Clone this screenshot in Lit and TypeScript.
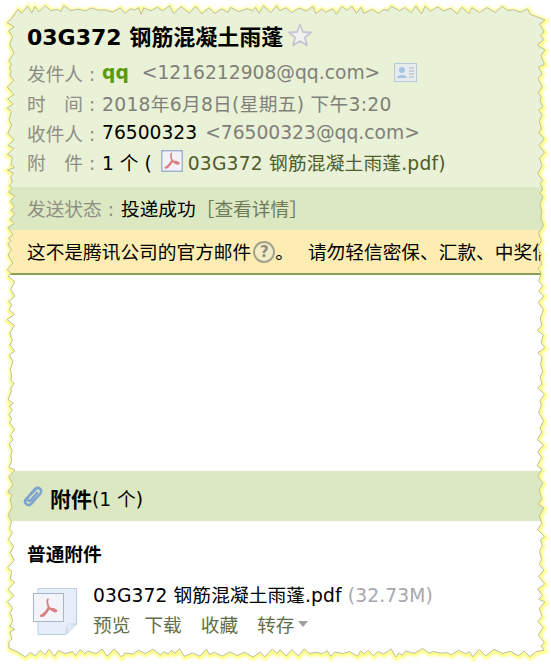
import { LitElement, html, css, svg } from "lit";
import { customElement } from "lit/decorators.js";

type Pt = [number, number];

function tornPath(): string {
  let seed = 4711;
  const rnd = () => {
    seed = (seed * 1103515245 + 12345) & 0x7fffffff;
    return seed / 0x7fffffff;
  };
  const pts: Pt[] = [];
  const edge = (from: number, to: number, base: number, amp: number, horizontal: boolean) => {
    const dir = to > from ? 1 : -1;
    let p = from;
    let up = true;
    while ((to - p) * dir > 0) {
      const off = (up ? rnd() * 0.5 : 0.5 + rnd() * 0.5) * amp;
      const v = base + off - amp / 2;
      pts.push(horizontal ? [p, v] : [v, p]);
      p += dir * (2.5 + rnd() * 6);
      up = !up;
    }
  };
  edge(18, 535, 10, 9, true);
  pts.push([545, 20]);
  edge(24, 648, 541, 8, false);
  pts.push([544, 650]);
  edge(536, 16, 653, 9, true);
  pts.push([9, 648]);
  edge(642, 22, 11, 8, false);
  pts.push([12, 18]);
  return "M" + pts.map((p) => `${p[0].toFixed(1)} ${p[1].toFixed(1)}`).join("L") + "Z";
}

const acrobat = svg`<path d="M12 3.5C10.2 3.5 10.6 8 12 11C10.6 14.6 7.6 17.6 4.6 19.4C6.8 20.6 9.8 16.6 12 12.8C14.2 12.2 17.6 12.6 19.6 14.4C19 16.4 14.6 14.6 12 11" fill="none" stroke="#d97f82" stroke-width="1.7" stroke-linejoin="round"/>`;

@customElement("app-root")
export class AppRoot extends LitElement {
  static styles = css`
    :host {
      display: block;
      position: relative;
      width: 551px;
      height: 665px;
      overflow: hidden;
      background: #fff;
      font-family: "DejaVu Sans", "Noto Sans CJK SC", sans-serif;
      font-size: 18.7px;
      color: #000;
    }
    .head { box-sizing: border-box; background: #e9f1d6; padding: 17px 0 0 27px; height: 187px; }
    .title { display: flex; align-items: center; height: 36px; font-size: 22px; font-weight: 700; margin-bottom: 4px; gap: 5px; white-space: nowrap; }
    .row { display: flex; align-items: center; height: 30px; white-space: nowrap; }
    .r3 { margin-bottom: -1px; }
    .label { color: #8e8e86; width: 75px; flex: none; }
    .gray { color: #80807a; }
    .spaced { letter-spacing: 0.3px; }
    .qq { color: #5b9a0a; font-weight: 700; }
    .sp { margin-left: 13px; }
    .sp2 { margin-left: 8px; }
    .link { color: #4f5c2b; letter-spacing: 0.2px; }
    .small-pdf { margin: 0 5px 0 9px; flex: none; }
    .card { margin-left: 14px; flex: none; }
    .status { box-sizing: border-box; background: #dce8c1; height: 43px; padding: 0 0 2px 27px; display: flex; align-items: center; white-space: nowrap; }
    .status .lbl { color: #8e8e86; width: 94px; }
    .status .br { color: #6f7a5a; }
    .warn { box-sizing: border-box; background: #fdedb2; height: 45px; border-bottom: 2px solid #8a9f55; padding: 0 0 2px 27px; display: flex; align-items: center; white-space: nowrap; overflow: hidden; }
    .q { width: 18px; height: 18px; border: 2px solid #a3a18d; border-radius: 50%; color: #8f8d79; font-size: 15px; font-weight: 700; display: flex; align-items: center; justify-content: center; flex: none; background: #f4ecc4; margin: 2px 0 0 2px; }
    .warn .tail { margin-left: 14px; }
    .blank { height: 196px; }
    .att-head { box-sizing: border-box; background: #dce8c1; height: 50px; display: flex; align-items: center; padding: 3px 0 0 22px; white-space: nowrap; }
    .att-head svg { margin-top: -2px; }
    .att-head b { font-size: 21px; margin-left: 7px; }
    .group { font-weight: 700; padding: 24px 0 0 27px; height: 41px; line-height: 20px; font-size: 18.7px; }
    .file { display: flex; padding-left: 33px; gap: 16px; }
    .file svg { flex: none; margin-top: 2px; }
    .name { height: 29px; line-height: 29px; white-space: nowrap; margin-top: -5px; letter-spacing: 0.1px; }
    .size { color: #a7a7ad; }
    .acts { display: flex; align-items: center; gap: 19px; height: 26px; color: #5f6f47; white-space: nowrap; }
    .acts .first { margin-right: -5px; }
    .acts .save { display: flex; align-items: center; gap: 3px; }
    .caret { width: 0; height: 0; border: 5.5px solid transparent; border-top: 6px solid #a0a0a0; border-bottom: 0; margin-top: 2px; }
    .edge { position: absolute; left: 0; top: 0; pointer-events: none; }
  `;

  render() {
    const d = tornPath();
    return html`
      <div class="head">
        <div class="title">
          <span>03G372 钢筋混凝土雨蓬</span>
          <svg width="24" height="24" viewBox="0 0 24 24"><path d="M12 1.5L15 9L23 9.5L16.8 14.5L19 22.5L12 18L5 22.5L7.2 14.5L1 9.5L9 9Z" fill="#f2f3ef" stroke="#c4c6d3" stroke-width="1.8" stroke-linejoin="round"/></svg>
        </div>
        <div class="row">
          <span class="label">发件人 :</span><span class="qq">qq</span>
          <span class="gray sp">&lt;1216212908@qq.com&gt;</span>
          <svg class="card" width="23" height="19" viewBox="0 0 23 19">
            <rect x=".5" y=".5" width="22" height="18" fill="#e6ecec" stroke="#b5c8df"/>
            <circle cx="8" cy="7" r="3" fill="#a9c2e0"/><path d="M3 15C3 11 13 11 13 15Z" fill="#a9c2e0"/>
            <path d="M15 5H20M15 8H20M15 11H20M15 14H20" stroke="#a8b4c2"/>
          </svg>
        </div>
        <div class="row"><span class="label">时　间 :</span><span class="gray spaced">2018年6月8日(星期五) 下午3:20</span></div>
        <div class="row r3"><span class="label">收件人 :</span><span>76500323</span><span class="gray sp2">&lt;76500323@qq.com&gt;</span></div>
        <div class="row">
          <span class="label">附　件 :</span><span>1 个 (</span>
          <svg class="small-pdf" width="22" height="22" viewBox="0 0 24 24"><rect x=".8" y=".8" width="22.4" height="22.4" fill="#f2f3f8" stroke="#a3b1d0" stroke-width="1.6"/>${acrobat}</svg>
          <span class="link">03G372 钢筋混凝土雨蓬.pdf)</span>
        </div>
      </div>
      <div class="status"><span class="lbl">发送状态 :</span><span>投递成功</span><span class="br">［查看详情］</span></div>
      <div class="warn">
        <span>这不是腾讯公司的官方邮件</span><span class="q">?</span><span>。</span><span class="tail">请勿轻信密保、汇款、中奖信息</span>
      </div>
      <div class="blank"></div>
      <div class="att-head">
        <svg width="21" height="23" viewBox="0 0 21 23"><path d="M15 3L4 14C1 18 6 22 9 19L18 9C21 5 17 1 13 4L6 12C4 15 7 17 9 15L15 8" fill="none" stroke="#7fa3cf" stroke-width="2.6" stroke-linecap="round"/></svg>
        <b>附件</b><span>(1 个)</span>
      </div>
      <div class="group">普通附件</div>
      <div class="file">
        <svg width="44" height="47" viewBox="0 0 44 47">
          <path d="M5 .5H43.5V36L33 46.5H5Z" fill="#e6eef9" stroke="#bccde4"/>
          <path d="M33 46.5C34 41 35 38 43.5 36L36 36C34 38 33 42 33 46.5Z" fill="#fff" stroke="#c4d2e6"/>
          <rect x=".5" y="5.5" width="30" height="28" fill="#f3f4f9" stroke="#a9b4cf"/>
          <g transform="translate(3 7.5) scale(1.05)">${acrobat}</g>
        </svg>
        <div>
          <div class="name">03G372 钢筋混凝土雨蓬.pdf <span class="size">(32.73M)</span></div>
          <div class="acts"><span class="first">预览</span><span>下载</span><span>收藏</span><span class="save">转存<i class="caret"></i></span></div>
        </div>
      </div>
      <svg class="edge" width="551" height="665" viewBox="0 0 551 665">
        <defs>
          <clipPath id="outer"><path clip-rule="evenodd" d="M0 0H551V665H0Z ${d}"/></clipPath>
          <filter id="soft" x="-5%" y="-5%" width="110%" height="110%"><feGaussianBlur stdDeviation="1"/></filter>
        </defs>
        <path fill="#fff" fill-rule="evenodd" d="M0 0H551V665H0Z ${d}"/>
        <g clip-path="url(#outer)">
          <path d="${d}" fill="none" stroke="#ffff88" stroke-width="5" filter="url(#soft)" transform="translate(0.5 1)"/>
        </g>
        <path d="${d}" fill="none" stroke="#bdbda6" stroke-width="1"/>
      </svg>
    `;
  }
}
